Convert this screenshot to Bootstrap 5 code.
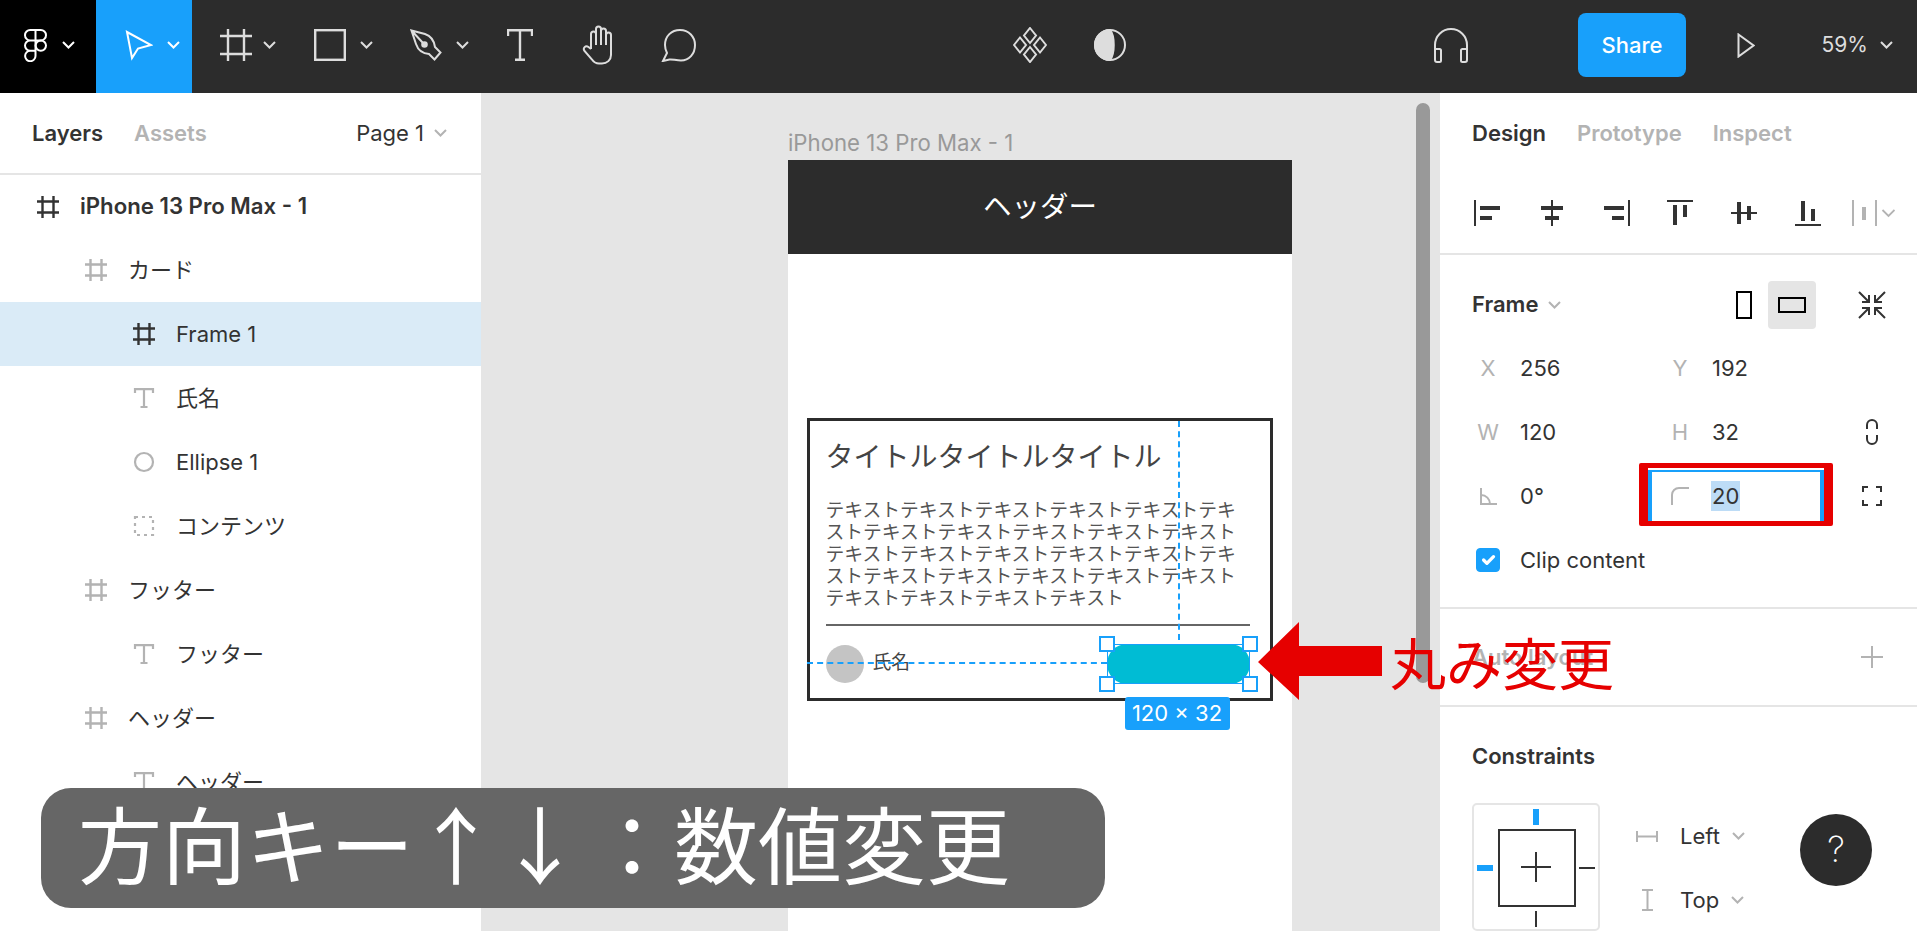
<!DOCTYPE html>
<html lang="ja">
<head>
  <meta charset="UTF-8">
  <meta name="viewport" content="width=device-width, initial-scale=1">
  <title>Figma</title>
  <link href="https://cdn.jsdelivr.net/npm/bootstrap@5.3.3/dist/css/bootstrap.min.css" rel="stylesheet">
  <style>
    html, body { height: 100%; overflow: hidden; }
    body { font-family: Inter, "Noto Sans CJK JP", sans-serif; font-size: 22px; color: #333; background: #fff; line-height: 1.2; }
    svg { display: block; flex: none; }
    .ic { fill: none; stroke: currentColor; stroke-width: 2; }

    #app { width: 1917px; height: 931px; }

    /* toolbar */
    .toolbar { height: 93px; background: #2c2c2c; color: #ddd; }
    .tool { height: 93px; flex: none; padding-bottom: 3px; }
    .tool-logo { width: 96px; background: #000; color: #fff; padding-left: 24px; }
    .tool-move { width: 96px; background: #18a0fb; color: #fff; padding-left: 29px; }
    .tool-drop { width: 96px; padding-left: 26px; }
    .tool-frame { padding-left: 28px; }
    .tool-one { width: 79.5px; }
    .chev { margin-left: 14px; }
    .gap-center { margin-left: 272px; }
    .gap-audio { margin-left: 262px; }
    .btn-share { width: 108px; height: 64px; margin: 0 0 3px 87px; background: #18a0fb; border: 0; border-radius: 8px; color: #fff; font-size: 22px; font-weight: 500; padding: 0; }
    .gap-play { margin-left: 20px; }
    .zoom-val { margin: 0 0 3px 36px; font-size: 21px; color: #ddd; }

    .main { height: 838px; }

    /* left panel */
    .left { width: 481px; flex: none; background: #fff; }
    .tabs { height: 81px; padding-left: 32px; padding-top: 1px; font-weight: 600; }
    .tabs .off { color: #b3b3b3; }
    .left .tabs { height: 82px; border-bottom: 2px solid #e5e5e5; gap: 31px; }
    .page-sel { margin-left: auto; margin-right: 34px; font-weight: 400; gap: 10px; }
    .layer { height: 64px; padding: 0; border: 0; color: #333; font-size: 22px; background: transparent; gap: 21px; }
    .layer.d0 { height: 63px; padding-left: 37px; font-size: 22.200px; font-weight: 600; }
    .layer.d1 { padding-left: 85px; }
    .layer.d2 { padding-left: 133px; }
    .layer.sel { background: #daebf7; }
    .muted-ic { color: #b3b3b3; }
    .dark-ic { color: #333; }

    /* canvas */
    .stage { width: 959px; flex: none; background: #e5e5e5; }
    .frame-label { left: 307px; top: 37px; color: #999; font-size: 22.200px; }
    .phone { left: 307px; top: 67px; width: 504px; height: 771px; background: #fff; }
    .phone-head { height: 94px; background: #2c2c2c; color: #fff; font-size: 28.500px; }
    .card-box { margin: 164px 0 0 19px; width: 466px; height: 283px; border: 3px solid #2c2c2c; padding: 0 15.500px; color: #444; }
    .card-title { font-size: 28px; line-height: 34px; margin-top: 18.500px; margin-bottom: 26px; }
    .card-text { font-size: 18.800px; line-height: 22.200px; width: 418px; margin: 0; color: #555; }
    .card-rule { height: 2px; width: 424px; background: #666; margin-top: 13px; }
    .card-foot { margin-top: 18px; height: 40px; width: 424px; }
    .avatar { width: 38px; height: 38px; border-radius: 50%; background: #c4c4c4; }
    .card-name { font-size: 18.800px; margin-left: 9px; }
    .pill { width: 143px; height: 40px; margin-left: auto; background: #00bcd4; border-radius: 20px; }
    .sel-box { inset: 0; border: 1.500px solid #18a0fb; }
    .handle { width: 16px; height: 16px; background: #fff; border: 2.500px solid #18a0fb; }
    .h-tl { left: -8px; top: -8px; }
    .h-tr { right: -8px; top: -8px; }
    .h-bl { left: -8px; bottom: -8px; }
    .h-br { right: -8px; bottom: -8px; }
    .size-tag { left: 18px; top: 53px; width: 105px; height: 33px; background: #18a0fb; color: #fff; border-radius: 3px; font-size: 22px; white-space: nowrap; }
    .guide-v { left: 368px; top: 0; height: 219px; border-left: 2px dashed #18a0fb; }
    .guide-h { left: -3px; top: 241px; width: 300px; border-top: 2px dashed #18a0fb; }
    .scroll-thumb { left: 935px; top: 10px; width: 14px; height: 580px; border-radius: 7px; background: #999; }

    /* right panel */
    .right { width: 477px; flex: none; background: #fff; }
    .right .tabs { height: 80px; padding-left: 32px; gap: 31px; }
    .align-row { height: 82px; padding-left: 34px; border-bottom: 2px solid #e5e5e5; }
    .align-row svg { fill: #333; }
    .frame-row { height: 81px; padding: 18px 30px 0 32px; font-weight: 600; }
    .frame-row .caret { margin-left: 10px; }
    .size-toggle { width: 48px; height: 48px; border-radius: 4px; }
    .size-toggle.on { background: #e5e5e5; margin-right: 41px; }
    .prop-section { height: 354px; border-bottom: 2px solid #e5e5e5; }
    .prop-row { display: grid; grid-template-columns: 32px 160px 32px 160px 32px; height: 64px; padding-left: 32px; align-items: center; }
    .prop-key { color: #b3b3b3; text-align: center; display: flex; justify-content: center; }
    .prop-val { padding-left: 16px; }
    .radius-input { grid-column: 3 / span 2; margin-left: -16px; margin-right: 32px; height: 53px; border: solid #18a0fb; border-width: 2px 4px; }
    .radius-input .corner { margin-left: 19px; }
    .radius-input .sel-text { margin-left: 22px; background: #bddcf6; padding: 2px 1px; }
    .check-row { padding-left: 36px; height: 64px; gap: 20px; }
    .check-row .form-check-input { width: 24px; height: 24px; margin: 0; background-color: #18a0fb; border-color: #18a0fb; border-radius: 4px; }
    .auto-row { height: 98px; padding: 0 34px 0 32px; border-bottom: 2px solid #e5e5e5; font-weight: 600; color: #b3b3b3; }
    .cons-title { padding: 36px 0 0 32px; font-weight: 600; height: 96px; }
    .cons-row { padding-left: 32px; }
    .cons-box { width: 128px; height: 128px; flex: none; border: 2px solid #e5e5e5; border-radius: 5px; }
    .cons-inner { left: 24px; top: 24px; width: 78px; height: 78px; border: 2px solid #333; }
    .cons-plus { left: 47px; top: 47px; }
    .cmark { background: #333; }
    .cmark.on { background: #18a0fb; }
    .m-top { left: 59px; top: 4px; width: 6px; height: 16px; }
    .m-left { left: 3px; top: 60px; width: 16px; height: 6px; }
    .m-right { left: 105px; top: 62px; width: 16px; height: 2px; }
    .m-bottom { left: 61px; top: 106px; width: 2px; height: 16px; }
    .cons-opts { margin-left: 36px; padding-top: 1px; }
    .cons-opt { height: 64px; gap: 22px; }
    .cons-ic { width: 22px; display: flex; justify-content: center; color: #b3b3b3; }
    .cons-opt .caret { margin-left: -10px; }

    /* annotations on top of the screenshot */
    .red-box { left: 1639px; top: 463px; width: 194px; height: 63px; border: solid #e60000; border-width: 5px 9px; border-radius: 2px; }
    .red-arrow { left: 1258px; top: 622px; }
    .red-note { left: 1390px; top: 630px; color: #e60000; font-size: 56px; line-height: 70px; white-space: nowrap; }
    .key-note { left: 41px; top: 788px; width: 1064px; height: 120px; background: #666; border-radius: 30px; color: #fff; font-family: "Noto Sans CJK JP", sans-serif; font-size: 84px; padding: 0 0 12px 37px; white-space: nowrap; }
    .key-value { margin-left: 8px; }
    .help { left: 1800px; top: 814px; width: 72px; height: 72px; border-radius: 50%; background: #2c2c2c; color: #fff; font-size: 36px; font-weight: 200; }
  </style>
</head>
<body>

<svg width="0" height="0" class="position-absolute">
  <symbol id="hash" viewBox="0 0 22 22"><path d="M5.500 0V22M16.500 0V22M0 5.500H22M0 16.500H22" fill="none" stroke="currentColor" stroke-width="2.400"/></symbol>
  <symbol id="ttool" viewBox="0 0 20 20"><path d="M1 5V1.200H19V5M10 1.200V19M6.500 19H13.500" fill="none" stroke="currentColor" stroke-width="2.200"/></symbol>
  <symbol id="down" viewBox="0 0 13 8"><path d="M1 1L6.500 6.500L12 1" fill="none" stroke="currentColor" stroke-width="2"/></symbol>
</svg>

<div id="app" class="position-relative overflow-hidden">

  <div class="toolbar d-flex align-items-center">
    <div class="tool tool-logo d-flex align-items-center">
      <svg width="23" height="33" viewBox="0 0 23 33" class="ic"><path d="M11.500 1H6.200a5.200 5.200 0 0 0 0 10.400H11.500ZM11.500 1H16.800a5.200 5.200 0 0 1 0 10.400H11.500ZM11.500 11.400H6.200a5.200 5.200 0 0 0 0 10.400H11.500ZM11.500 21.800H6.200a5.200 5.200 0 1 0 5.300 5.200Z"/><circle cx="16.800" cy="16.600" r="5.200"/></svg>
      <svg width="13" height="8" class="chev" style="margin-left:15px"><use href="#down"/></svg>
    </div>
    <div class="tool tool-move d-flex align-items-center">
      <svg width="28" height="31" viewBox="0 0 28 31" class="ic"><path d="M2 2L26 15L13 18.500L7 28Z"/></svg>
      <svg width="13" height="8" class="chev" style="margin-left:14px"><use href="#down"/></svg>
    </div>
    <div class="tool tool-drop tool-frame d-flex align-items-center">
      <svg width="32" height="32" viewBox="0 0 32 32"><path d="M8 0V32M24 0V32M0 7H32M0 25H32" fill="none" stroke="currentColor" stroke-width="2.400"/></svg>
      <svg width="13" height="8" class="chev" style="margin-left:11px"><use href="#down"/></svg>
    </div>
    <div class="tool tool-drop d-flex align-items-center">
      <svg width="32" height="32" viewBox="0 0 32 32"><rect x="1.200" y="1.200" width="29.600" height="29.600" fill="none" stroke="currentColor" stroke-width="2.400"/></svg>
      <svg width="13" height="8" class="chev"><use href="#down"/></svg>
    </div>
    <div class="tool tool-drop d-flex align-items-center">
      <svg width="32" height="32" viewBox="0 0 32 32" class="ic"><path d="M1.500 1.500L15 5C21 7 24 11 25 18L30.500 23.500L24.500 30.500L19 25C12 24.500 8 21 6 15ZM1.500 1.500L13 14"/><circle cx="14.500" cy="15.500" r="2.300" fill="currentColor"/></svg>
      <svg width="13" height="8" class="chev"><use href="#down"/></svg>
    </div>
    <div class="tool tool-one d-flex align-items-center justify-content-center">
      <svg width="26" height="32" viewBox="0 0 26 32"><path d="M1 7V1.200H25V7M13 1.200V31M8 30.800H18" fill="none" stroke="currentColor" stroke-width="2.400"/></svg>
    </div>
    <div class="tool tool-one d-flex align-items-center justify-content-center">
      <svg width="34" height="40" viewBox="0 0 34 40" class="ic"><path d="M9 24V9a2.500 2.500 0 0 1 5 0V20M14 20V4a2.500 2.500 0 0 1 5 0V20M19 20V6a2.500 2.500 0 0 1 5 0V20M24 20V10a2.500 2.500 0 0 1 5 0V30c0 5-4 8.500-9 8.500h-3c-3 0-5-1-7-4L2.500 26c-2-3 1-6 4-4L9 24"/></svg>
    </div>
    <div class="tool tool-one d-flex align-items-center justify-content-center">
      <svg width="36" height="33" viewBox="0 0 36 33" class="ic"><path d="M2 32L6 24C4.500 21 4 18.500 4 16C4 7 10.500 1 19 1C28 1 34 8 34 16C34 25 28 31.500 20 31.500C15 31.500 11 30 8.500 30.500Z"/></svg>
    </div>

    <div class="tool tool-one d-flex align-items-center justify-content-center gap-center">
      <svg width="34" height="36" viewBox="0 0 34 36" class="ic"><path d="M17 1L23 8.500L17 16L11 8.500ZM7 10.500L13 18L7 25.500L1 18ZM27 10.500L33 18L27 25.500L21 18ZM17 20L23 27.500L17 35L11 27.500Z"/></svg>
    </div>
    <div class="tool tool-one d-flex align-items-center justify-content-center">
      <svg width="32" height="32" viewBox="0 0 32 32" class="ic"><circle cx="16" cy="16" r="15"/><path d="M16 1A15 15 0 0 0 16 31C21 25 21 7 16 1Z" fill="currentColor"/></svg>
    </div>
    <div class="tool tool-one d-flex align-items-center justify-content-center gap-audio">
      <svg width="36" height="36" viewBox="0 0 36 36" class="ic"><path d="M2 32V18A16 16 0 0 1 34 18V32M2 22H6.500A1.500 1.500 0 0 1 8 23.500V33.500A1.500 1.500 0 0 1 6.500 35H4A2 2 0 0 1 2 33ZM34 22H29.500A1.500 1.500 0 0 0 28 23.500V33.500A1.500 1.500 0 0 0 29.500 35H32A2 2 0 0 0 34 33Z"/></svg>
    </div>
    <button class="btn btn-share" type="button">Share</button>
    <div class="tool tool-one d-flex align-items-center justify-content-center gap-play">
      <svg width="18" height="25" viewBox="0 0 18 25" class="ic"><path d="M1.500 1.500L16.500 12.500L1.500 23.500Z"/></svg>
    </div>
    <div class="zoom-val d-flex align-items-center">59%<svg width="13" height="8" style="margin-left:12px"><use href="#down"/></svg></div>
  </div>

  <div class="main d-flex">

    <div class="left">
      <div class="tabs d-flex align-items-center">
        <span>Layers</span><span class="off">Assets</span>
        <span class="page-sel d-flex align-items-center">Page 1<svg width="13" height="8" class="muted-ic"><use href="#down"/></svg></span>
      </div>
      <ul class="list-group list-group-flush">
        <li class="list-group-item layer d0 d-flex align-items-center"><svg width="22" height="22" class="dark-ic"><use href="#hash"/></svg>iPhone 13 Pro Max - 1</li>
        <li class="list-group-item layer d1 d-flex align-items-center"><svg width="22" height="22" class="muted-ic"><use href="#hash"/></svg>カード</li>
        <li class="list-group-item layer d2 sel d-flex align-items-center"><svg width="22" height="22" class="dark-ic"><use href="#hash"/></svg>Frame 1</li>
        <li class="list-group-item layer d2 d-flex align-items-center"><svg width="22" height="20" class="muted-ic"><use href="#ttool"/></svg>氏名</li>
        <li class="list-group-item layer d2 d-flex align-items-center"><svg width="22" height="22" viewBox="0 0 22 22" class="muted-ic"><circle cx="11" cy="11" r="9" fill="none" stroke="currentColor" stroke-width="2.200"/></svg>Ellipse 1</li>
        <li class="list-group-item layer d2 d-flex align-items-center"><svg width="22" height="22" viewBox="0 0 22 22" class="muted-ic"><rect x="2" y="2" width="18" height="18" fill="none" stroke="currentColor" stroke-width="2.200" stroke-dasharray="3 4"/></svg>コンテンツ</li>
        <li class="list-group-item layer d1 d-flex align-items-center"><svg width="22" height="22" class="muted-ic"><use href="#hash"/></svg>フッター</li>
        <li class="list-group-item layer d2 d-flex align-items-center"><svg width="22" height="20" class="muted-ic"><use href="#ttool"/></svg>フッター</li>
        <li class="list-group-item layer d1 d-flex align-items-center"><svg width="22" height="22" class="muted-ic"><use href="#hash"/></svg>ヘッダー</li>
        <li class="list-group-item layer d2 d-flex align-items-center"><svg width="22" height="20" class="muted-ic"><use href="#ttool"/></svg>ヘッダー</li>
      </ul>
    </div>

    <div class="stage position-relative overflow-hidden">
      <div class="frame-label position-absolute">iPhone 13 Pro Max - 1</div>
      <div class="phone position-absolute">
        <div class="phone-head d-flex align-items-center justify-content-center">ヘッダー</div>
        <div class="card-box position-relative">
          <div class="card-title">タイトルタイトルタイトル</div>
          <p class="card-text">テキストテキストテキストテキストテキストテキストテキストテキストテキストテキストテキストテキストテキストテキストテキストテキストテキストテキストテキストテキストテキストテキストテキストテキストテキストテキスト</p>
          <div class="card-rule"></div>
          <div class="card-foot d-flex align-items-center">
            <div class="avatar"></div>
            <span class="card-name">氏名</span>
            <div class="pill position-relative">
              <div class="sel-box position-absolute"></div>
              <div class="handle h-tl position-absolute"></div>
              <div class="handle h-tr position-absolute"></div>
              <div class="handle h-bl position-absolute"></div>
              <div class="handle h-br position-absolute"></div>
              <div class="size-tag position-absolute d-flex align-items-center justify-content-center">120 × 32</div>
            </div>
          </div>
          <div class="guide-v position-absolute"></div>
          <div class="guide-h position-absolute"></div>
        </div>
      </div>
      <div class="scroll-thumb position-absolute"></div>
    </div>

    <div class="right">
      <div class="tabs d-flex align-items-center">
        <span>Design</span><span class="off">Prototype</span><span class="off">Inspect</span>
      </div>
      <div class="align-row d-flex align-items-center">
        <svg width="26" height="26" style="margin-right:39px"><rect x="0" y="0" width="2" height="26"/><rect x="6" y="6" width="20" height="4"/><rect x="6" y="16" width="12" height="4"/></svg>
        <svg width="26" height="26" style="margin-right:39px"><rect x="12" y="0" width="2" height="26"/><rect x="2" y="6" width="22" height="4"/><rect x="6" y="16" width="14" height="4"/></svg>
        <svg width="26" height="26" style="margin-right:37px"><rect x="24" y="0" width="2" height="26"/><rect x="0" y="6" width="20" height="4"/><rect x="8" y="16" width="12" height="4"/></svg>
        <svg width="26" height="26" style="margin-right:38px"><rect x="0" y="0" width="26" height="2"/><rect x="6" y="5" width="4" height="20"/><rect x="16" y="5" width="4" height="12"/></svg>
        <svg width="26" height="26" style="margin-right:38px"><rect x="0" y="12" width="26" height="2"/><rect x="6" y="2" width="4" height="22"/><rect x="16" y="6" width="4" height="14"/></svg>
        <svg width="26" height="26" style="margin-right:31px"><rect x="0" y="24" width="26" height="2"/><rect x="6" y="1" width="4" height="20"/><rect x="16" y="9" width="4" height="12"/></svg>
        <svg width="43" height="26" viewBox="0 0 43 26" style="fill:#b3b3b3"><rect x="0" y="0" width="2" height="26"/><rect x="10" y="7" width="4" height="13"/><rect x="23" y="0" width="2" height="26"/><path d="M30.500 10L36.500 16L42.500 10" fill="none" stroke="#b3b3b3" stroke-width="1.800"/></svg>
      </div>

      <div class="prop-section">
        <div class="frame-row d-flex align-items-center">
          <span>Frame</span>
          <svg width="13" height="8" class="caret muted-ic"><use href="#down"/></svg>
          <div class="size-toggle d-flex align-items-center justify-content-center ms-auto">
            <svg width="16" height="28" viewBox="0 0 16 28"><rect x="1" y="1" width="14" height="26" fill="none" stroke="#000" stroke-width="2"/></svg>
          </div>
          <div class="size-toggle on d-flex align-items-center justify-content-center">
            <svg width="28" height="16" viewBox="0 0 28 16"><rect x="1" y="1" width="26" height="14" fill="none" stroke="#000" stroke-width="2"/></svg>
          </div>
          <svg width="30" height="30" viewBox="0 0 30 30" fill="none" stroke="#333" stroke-width="2"><path d="M2 2L12 12M12 5V12H5M28 2L18 12M18 5V12H25M2 28L12 18M12 25V18H5M28 28L18 18M18 25V18H25"/></svg>
        </div>
        <div class="prop-row"><span class="prop-key">X</span><span class="prop-val">256</span><span class="prop-key">Y</span><span class="prop-val">192</span></div>
        <div class="prop-row">
          <span class="prop-key">W</span><span class="prop-val">120</span><span class="prop-key">H</span><span class="prop-val">32</span>
          <div class="prop-key"><svg width="14" height="28" viewBox="0 0 14 28" fill="none" stroke="#333" stroke-width="2"><path d="M2 11V7a5 5 0 0 1 10 0V11M2 17V21a5 5 0 0 0 10 0V17"/></svg></div>
        </div>
        <div class="prop-row">
          <span class="prop-key"><svg width="17" height="17" viewBox="0 0 17 17" fill="none" stroke="#b3b3b3" stroke-width="2"><path d="M1 0V16H17M1 7C6 7 10 11 10 16"/></svg></span>
          <span class="prop-val">0°</span>
          <div class="radius-input d-flex align-items-center">
            <svg width="18" height="18" viewBox="0 0 18 18" class="corner" fill="none" stroke="#b3b3b3" stroke-width="2"><path d="M1 18V8a7 7 0 0 1 7-7H18"/></svg>
            <span class="sel-text">20</span>
          </div>
          <div class="prop-key"><svg width="20" height="20" viewBox="0 0 20 20" fill="none" stroke="#333" stroke-width="2"><path d="M1 6V1H6M14 1H19V6M19 14V19H14M6 19H1V14"/></svg></div>
        </div>
        <div class="check-row d-flex align-items-center">
          <input class="form-check-input" type="checkbox" checked>
          <span>Clip content</span>
        </div>
      </div>

      <div class="auto-row d-flex align-items-center justify-content-between">
        <span>Auto layout</span>
        <svg width="22" height="22" viewBox="0 0 22 22" fill="none" stroke="#b3b3b3" stroke-width="2"><path d="M11 0V22M0 11H22"/></svg>
      </div>

      <div class="cons-title">Constraints</div>
      <div class="cons-row d-flex">
        <div class="cons-box position-relative">
          <div class="cmark on m-top position-absolute"></div>
          <div class="cmark on m-left position-absolute"></div>
          <div class="cmark m-right position-absolute"></div>
          <div class="cmark m-bottom position-absolute"></div>
          <div class="cons-inner position-absolute"></div>
          <svg class="cons-plus position-absolute" width="30" height="30" viewBox="0 0 30 30" fill="none" stroke="#333" stroke-width="2"><path d="M15 0V30M0 15H30"/></svg>
        </div>
        <div class="cons-opts">
          <div class="cons-opt d-flex align-items-center">
            <span class="cons-ic"><svg width="22" height="11" viewBox="0 0 22 11" fill="none" stroke="currentColor" stroke-width="2"><path d="M1 0V11M21 0V11M1 5.500H21"/></svg></span>
            <span>Left</span>
            <svg width="13" height="8" class="caret muted-ic"><use href="#down"/></svg>
          </div>
          <div class="cons-opt d-flex align-items-center">
            <span class="cons-ic"><svg width="11" height="22" viewBox="0 0 11 22" fill="none" stroke="currentColor" stroke-width="2"><path d="M0 1H11M0 21H11M5.500 1V21"/></svg></span>
            <span>Top</span>
            <svg width="13" height="8" class="caret muted-ic"><use href="#down"/></svg>
          </div>
        </div>
      </div>
    </div>
  </div>

  <div class="red-box position-absolute"></div>
  <svg class="red-arrow position-absolute" width="124" height="78" viewBox="0 0 124 78"><path d="M0 40L41 0V24H124V54H41V78Z" fill="#e60000"/></svg>
  <div class="red-note position-absolute">丸み変更</div>
  <div class="key-note position-absolute d-flex align-items-center">方向キー↑↓<span class="key-value">：数値変更</span></div>
  <div class="help position-absolute d-flex align-items-center justify-content-center">?</div>
</div>

</body>
</html>
